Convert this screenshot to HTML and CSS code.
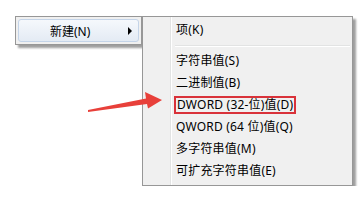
FILE: index.html
```html
<!DOCTYPE html>
<html>
<head>
  <meta charset="utf-8">
  <title>新建菜单</title>
  <link rel="stylesheet" href="styles.css">
</head>
<body>

<div class="stage">
  <div class="menu parent">
    <div class="item hover">
      <span class="label">新建(N)</span>
      <span class="sub"></span>
    </div>
  </div>

  <div class="menu newmenu">
    <div class="item">项(K)</div>
    <div class="sep"></div>
    <div class="item">字符串值(S)</div>
    <div class="item">二进制值(B)</div>
    <div class="item"><span class="mark">DWORD (32-位)值(D)</span></div>
    <div class="item">QWORD (64 位)值(Q)</div>
    <div class="item">多字符串值(M)</div>
    <div class="item">可扩充字符串值(E)</div>
  </div>

  <svg class="arrow" width="80" height="24" viewBox="86 90 80 24">
    <polygon points="88,110 146,98.5 145,92 162,100 148,108.5 147,104 88,112" fill="#e8403a"/>
  </svg>
</div>

</body>
</html>
```

FILE: styles.css
```css
body {
  margin: 0;
  background-color: #fff;
  font-family: "Noto Sans", "Noto Sans CJK SC", sans-serif;
  font-size: 12px;
  color: #000;
}

.stage {
  position: relative;
  display: flex;
  align-items: flex-start;
  padding: 16px 0 0 15px;
}

.menu {
  background-color: #f0f0f0;
  border: 1px solid #979797;
  box-shadow: 3px 3px 2px rgba(0, 0, 0, .38);
  padding: 2px;
}

/* left menu, only the hovered row shows */
.parent {
  width: 121px;
}
.parent .item {
  display: flex;
  align-items: center;
  height: 21px;
  padding-left: 31px;
  padding-right: 6px;
  border: 1px solid #c4d4e8;
  border-radius: 3px;
  background: linear-gradient(#f5f8fc, #e4ebf4);
}
.parent .label { flex: 1; }
.sub {
  width: 0;
  height: 0;
  border-top: 4px solid transparent;
  border-bottom: 4px solid transparent;
  border-left: 4px solid #000;
}

/* submenu */
.newmenu {
  width: 205px;
  padding-bottom: 3px;
  background: linear-gradient(to right, #f0f0f0 27px, #e2e3e3 27px, #e2e3e3 28px, #fff 28px, #fff 29px, #f0f0f0 29px);
}
.newmenu .item {
  height: 22px;
  line-height: 22px;
  padding-left: 31px;
  letter-spacing: .2px;
  white-space: nowrap;
}
.sep {
  height: 1px;
  margin: 4px 0 3px 30px;
  background-color: #e2e3e3;
  border-bottom: 1px solid #fff;
}
.mark {
  border: 2px solid #d9323a;
  padding: 0 1px;
  margin-left: -2px;
  line-height: 14px;
  display: inline-block;
}

.arrow {
  position: absolute;
  left: 86px;
  top: 90px;
}
```
